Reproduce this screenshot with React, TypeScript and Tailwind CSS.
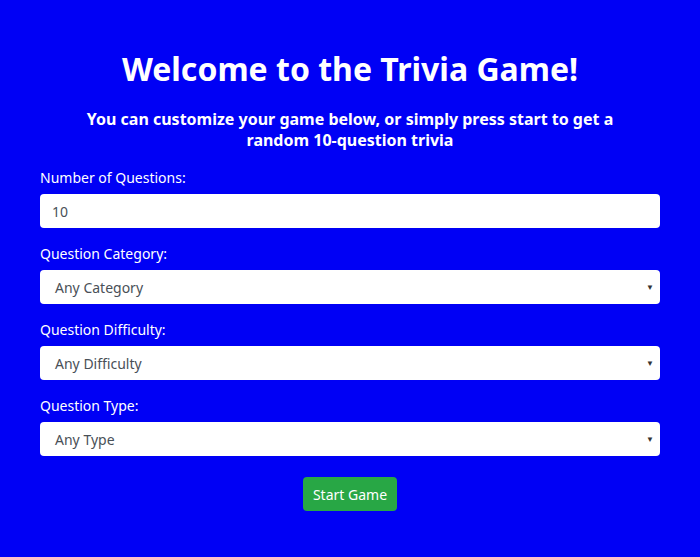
const fields = [
  { label: "Question Category:", value: "Any Category" },
  { label: "Question Difficulty:", value: "Any Difficulty" },
  { label: "Question Type:", value: "Any Type" },
];

export default function App() {
  return (
    <div
      className="min-h-[557px] bg-[#0000f5] px-10 pt-[47px] text-white"
      style={{ fontFamily: '"Noto Sans", "Open Sans", sans-serif' }}
    >
      {/* Header */}
      <h1 className="text-center text-[32px] font-bold leading-[44px]">
        Welcome to the Trivia Game!
      </h1>
      <p className="mx-auto mt-[18px] max-w-[560px] text-center text-[16px] font-bold leading-[21px]">
        You can customize your game below, or simply press start to get a random 10-question trivia
      </p>

      {/* Form */}
      <div className="mt-[17px] flex flex-col">
        <label className="text-[14px] leading-[20px]">Number of Questions:</label>
        <div className="mt-[6px] flex h-[34px] items-center rounded-[4px] bg-white px-3 text-[14px] text-[#495057]">
          10
        </div>

        {fields.map((field) => (
          <div key={field.label} className="mt-[16px] flex flex-col">
            <label className="text-[14px] leading-[20px]">{field.label}</label>
            <div className="mt-[6px] flex h-[34px] items-center justify-between rounded-[4px] bg-white pl-[15px] pr-[6px] text-[14px] text-[#495057]">
              <span>{field.value}</span>
              <span className="text-[8px] text-[#333]">▼</span>
            </div>
          </div>
        ))}

        <div className="mt-[21px] flex justify-center">
          <button className="h-[34px] rounded-[4px] bg-[#28a745] px-[10px] text-[14px] text-white">
            Start Game
          </button>
        </div>
      </div>
    </div>
  );
}
